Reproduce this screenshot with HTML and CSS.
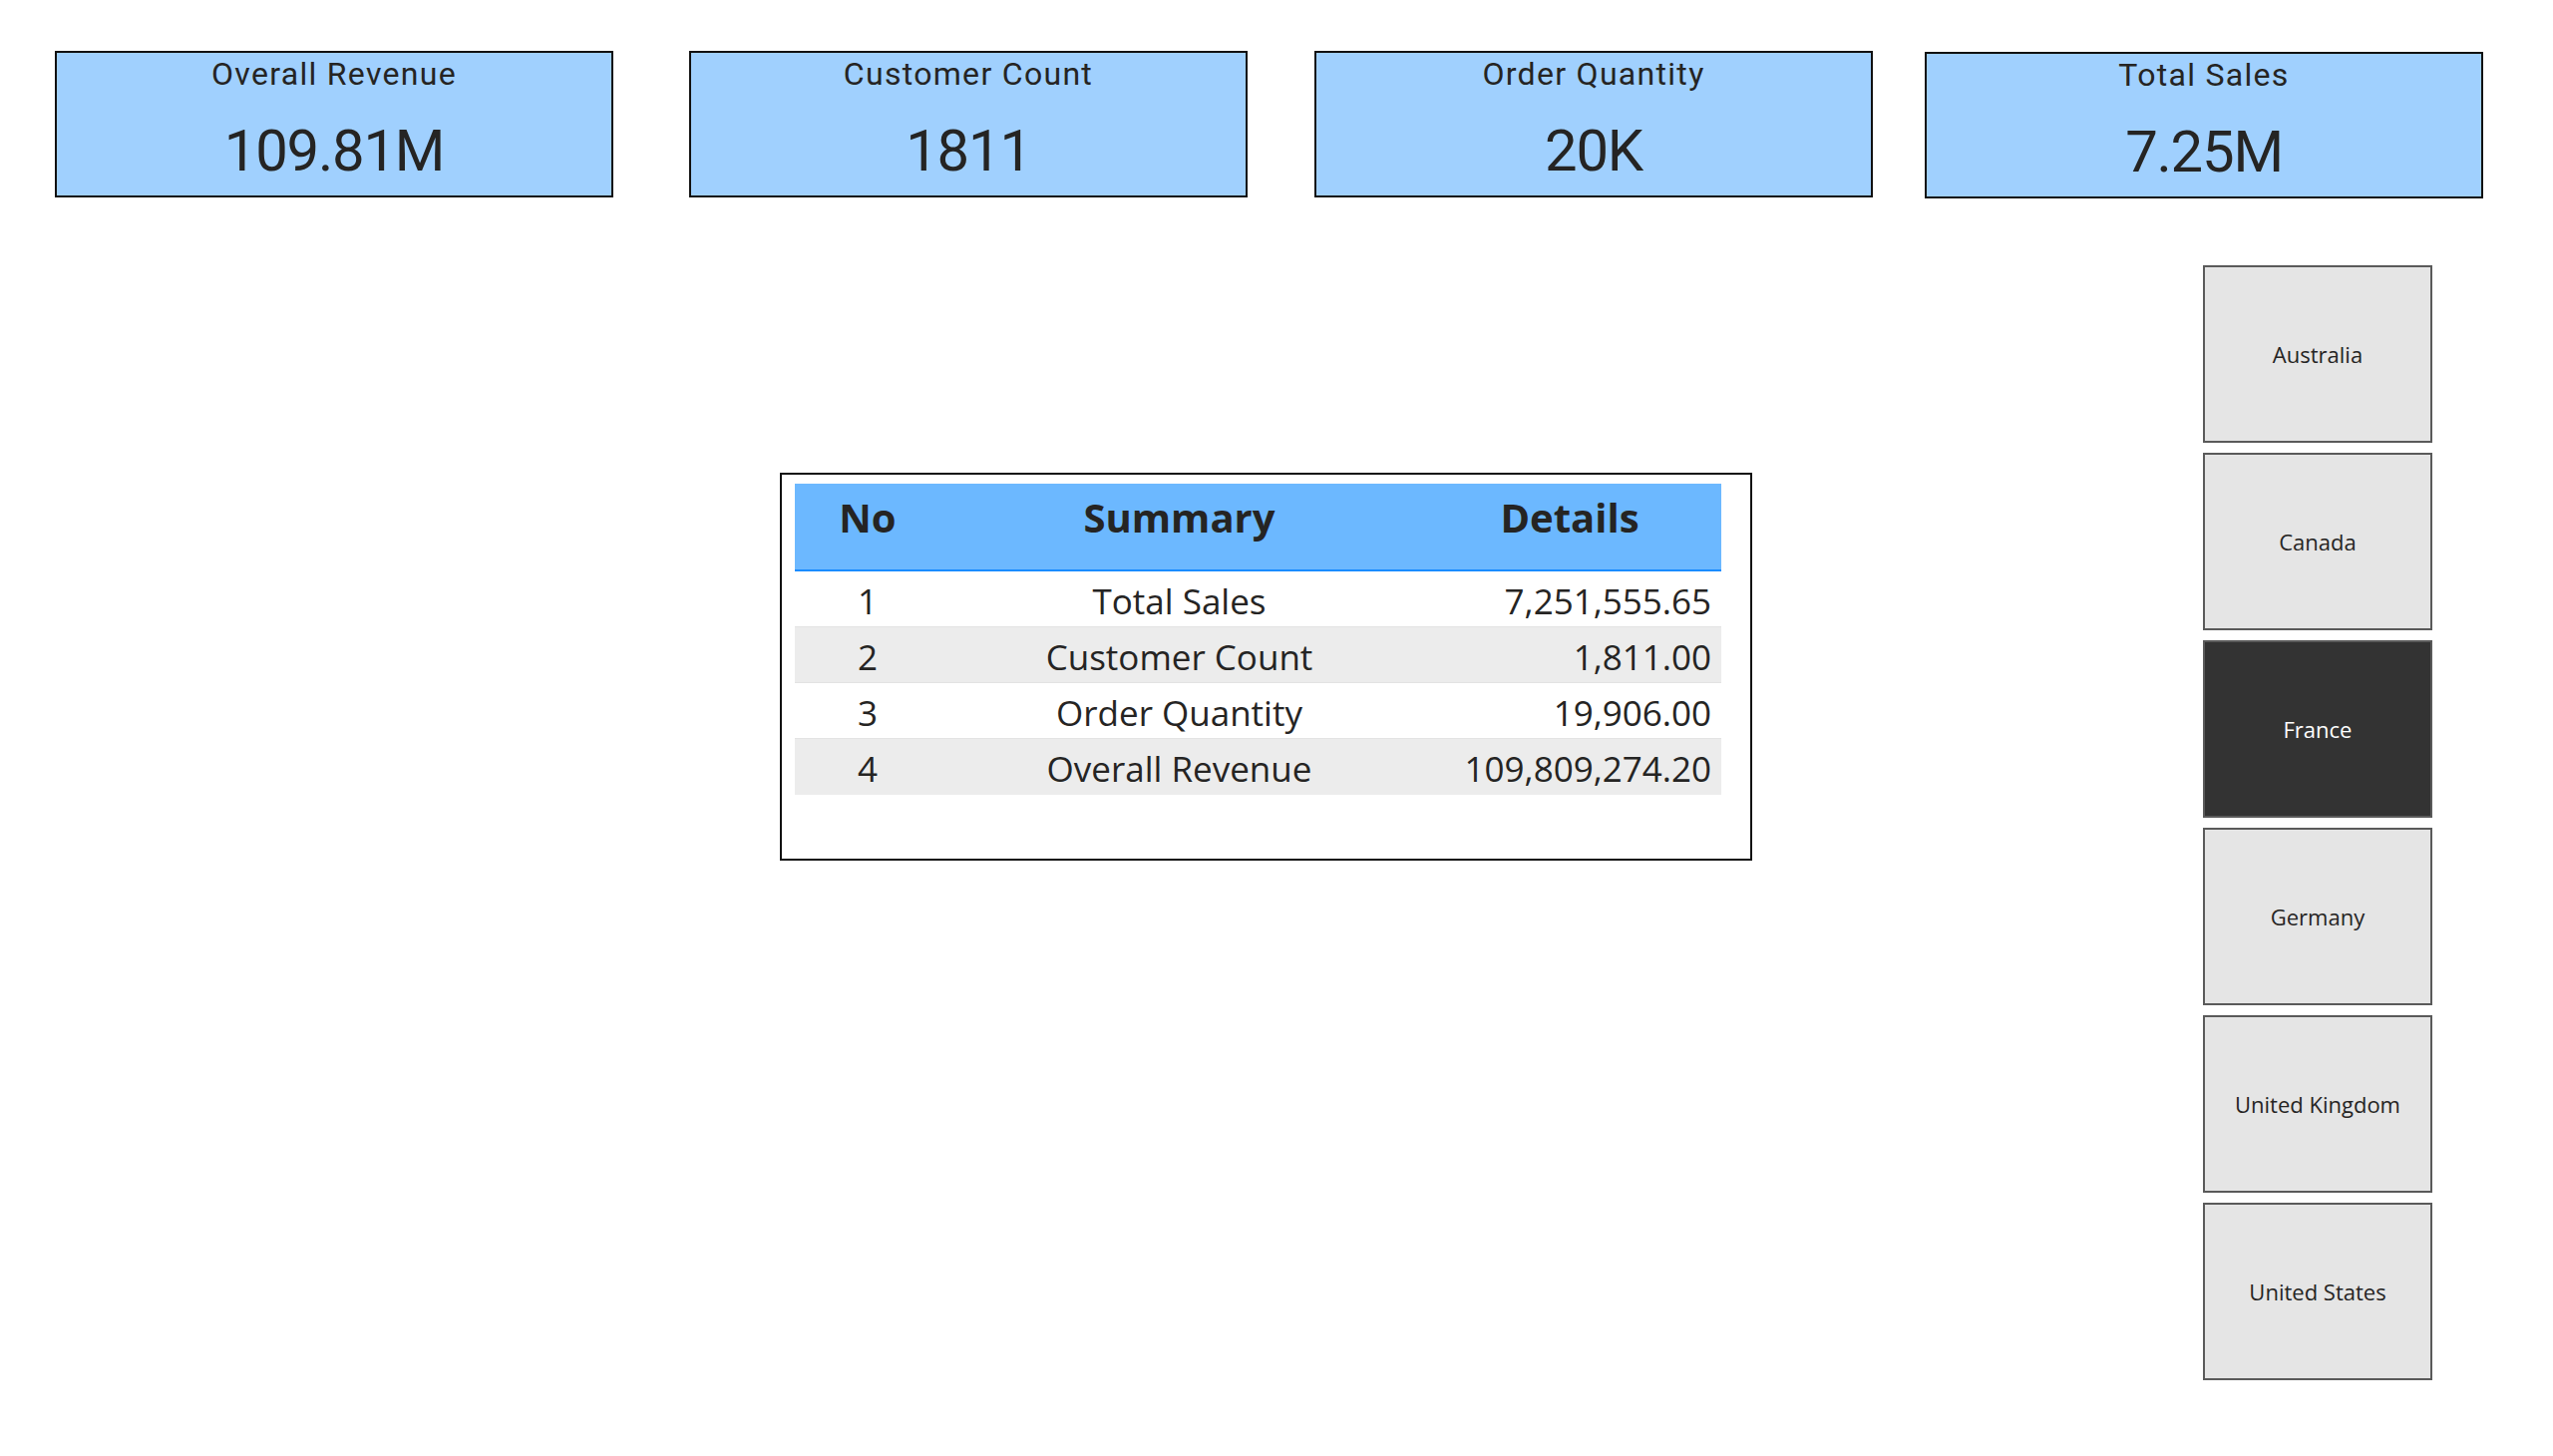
FILE: index.html
```html
<!DOCTYPE html>
<html lang="en">
<head>
<meta charset="utf-8">
<title>Sales Report</title>
<link rel="stylesheet" href="styles.css">
</head>
<body>
<div class="page">
  <div class="cards">
    <div class="card card-1">
      <div class="card-title">Overall Revenue</div>
      <div class="card-value">109.81M</div>
    </div>
    <div class="card card-2">
      <div class="card-title">Customer Count</div>
      <div class="card-value">1811</div>
    </div>
    <div class="card card-3">
      <div class="card-title">Order Quantity</div>
      <div class="card-value">20K</div>
    </div>
    <div class="card card-4">
      <div class="card-title">Total Sales</div>
      <div class="card-value">7.25M</div>
    </div>
  </div>

  <div class="main">
    <div class="table-box">
      <div class="grid">
        <div class="row head">
          <div class="cell c-no">No</div>
          <div class="cell c-sum">Summary</div>
          <div class="cell c-det">Details</div>
        </div>
        <div class="row">
          <div class="cell c-no">1</div>
          <div class="cell c-sum">Total Sales</div>
          <div class="cell c-det">7,251,555.65</div>
        </div>
        <div class="row alt">
          <div class="cell c-no">2</div>
          <div class="cell c-sum">Customer Count</div>
          <div class="cell c-det">1,811.00</div>
        </div>
        <div class="row">
          <div class="cell c-no">3</div>
          <div class="cell c-sum">Order Quantity</div>
          <div class="cell c-det">19,906.00</div>
        </div>
        <div class="row alt last">
          <div class="cell c-no">4</div>
          <div class="cell c-sum">Overall Revenue</div>
          <div class="cell c-det">109,809,274.20</div>
        </div>
      </div>
    </div>

    <div class="slicer">
      <div class="chip">Australia</div>
      <div class="chip">Canada</div>
      <div class="chip chip-on">France</div>
      <div class="chip">Germany</div>
      <div class="chip">United Kingdom</div>
      <div class="chip">United States</div>
    </div>
  </div>
</div>
</body>
</html>
```

FILE: styles.css
```css
html, body {
  margin: 0;
  padding: 0;
  background: #ffffff;
}

.page {
  width: 2560px;
  height: 1460px;
  padding-top: 51px;
  box-sizing: border-box;
  overflow: hidden;
}

/* KPI cards */
.cards {
  display: flex;
  align-items: flex-start;
  height: 149px;
}

.card {
  width: 560px;
  height: 147px;
  box-sizing: border-box;
  border: 2px solid #111111;
  background: #a0d0fe;
  color: #252423;
  text-align: center;
  font-family: Roboto, "Liberation Sans", sans-serif;
  padding-top: 5px;
}

.card-1 { margin-left: 55px; }
.card-2 { margin-left: 76px; }
.card-3 { margin-left: 67px; }
.card-4 { margin-left: 52px; margin-top: 1px; }

.card-title {
  font-size: 32px;
  line-height: 32px;
  letter-spacing: 1.3px;
}

.card-value {
  margin-top: 32px;
  font-size: 58px;
  line-height: 58px;
  letter-spacing: -1.2px;
}

/* Main area */
.main {
  display: flex;
  align-items: flex-start;
  margin-top: 66px;
}

.table-box {
  margin-left: 782px;
  margin-top: 208px;
  width: 975px;
  height: 389px;
  box-sizing: border-box;
  border: 2px solid #111111;
  padding: 9px 29px 0 13px;
}

.grid {
  font-family: "Open Sans", "Noto Sans", sans-serif;
  color: #252423;
}

.row {
  display: grid;
  grid-template-columns: 146px 479px 304px;
  height: 56px;
  box-sizing: border-box;
  border-bottom: 1px solid #e3e3e3;
  font-size: 35px;
  line-height: 51px;
}

.row .cell {
  padding-top: 4px;
  white-space: nowrap;
}

.row.alt { background: #ececec; }
.row.last { border-bottom: none; }

.c-no, .c-sum { text-align: center; }
.c-det { text-align: right; padding-right: 10px; }

.row.head {
  height: 88px;
  background: #6cb8ff;
  border-bottom: 2px solid #1a8cff;
  font-size: 40px;
  font-weight: 700;
  line-height: 48px;
}

.row.head .cell {
  padding-top: 10px;
}

.row.head .c-det {
  text-align: center;
  padding-right: 0;
}

/* Slicer */
.slicer {
  margin-left: 452px;
  display: flex;
  flex-direction: column;
  gap: 10px;
}

.chip {
  width: 230px;
  height: 178px;
  box-sizing: border-box;
  border: 2px solid #5a5a5a;
  background: #e5e5e5;
  color: #252423;
  display: flex;
  align-items: center;
  justify-content: center;
  font-family: "Open Sans", "Noto Sans", sans-serif;
  font-size: 22px;
}

.chip-on {
  background: #333333;
  color: #ffffff;
}
```
